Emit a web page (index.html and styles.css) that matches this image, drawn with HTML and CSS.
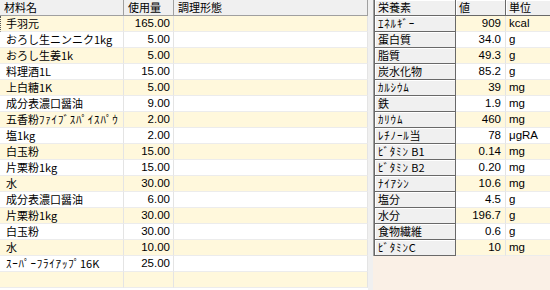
FILE: index.html
```html
<!DOCTYPE html>
<html lang="ja">
<head>
<meta charset="utf-8">
<link rel="stylesheet" href="styles.css">
</head>
<body>
<div class="app">
  <div class="grid">
    <div class="row head">
      <div class="c c1">材料名</div><div class="c c2">使用量</div><div class="c c3">調理形態</div>
    </div>
    <div class="row alt"><div class="c c1 focus">手羽元</div><div class="c c2 num">165.00</div><div class="c c3"></div></div>
    <div class="row"><div class="c c1">おろし生ニンニク1kg</div><div class="c c2 num">5.00</div><div class="c c3"></div></div>
    <div class="row alt"><div class="c c1">おろし生姜1k</div><div class="c c2 num">5.00</div><div class="c c3"></div></div>
    <div class="row"><div class="c c1">料理酒1L</div><div class="c c2 num">15.00</div><div class="c c3"></div></div>
    <div class="row alt"><div class="c c1">上白糖1K</div><div class="c c2 num">5.00</div><div class="c c3"></div></div>
    <div class="row"><div class="c c1">成分表濃口醤油</div><div class="c c2 num">9.00</div><div class="c c3"></div></div>
    <div class="row alt"><div class="c c1">五香粉<span class="hk">ﾌｧｲﾌﾞｽﾊﾟｲｽﾊﾟｳ</span></div><div class="c c2 num">2.00</div><div class="c c3"></div></div>
    <div class="row"><div class="c c1">塩1kg</div><div class="c c2 num">2.00</div><div class="c c3"></div></div>
    <div class="row alt"><div class="c c1">白玉粉</div><div class="c c2 num">15.00</div><div class="c c3"></div></div>
    <div class="row"><div class="c c1">片栗粉1kg</div><div class="c c2 num">15.00</div><div class="c c3"></div></div>
    <div class="row alt"><div class="c c1">水</div><div class="c c2 num">30.00</div><div class="c c3"></div></div>
    <div class="row"><div class="c c1">成分表濃口醤油</div><div class="c c2 num">6.00</div><div class="c c3"></div></div>
    <div class="row alt"><div class="c c1">片栗粉1kg</div><div class="c c2 num">30.00</div><div class="c c3"></div></div>
    <div class="row"><div class="c c1">白玉粉</div><div class="c c2 num">30.00</div><div class="c c3"></div></div>
    <div class="row alt"><div class="c c1">水</div><div class="c c2 num">10.00</div><div class="c c3"></div></div>
    <div class="row"><div class="c c1"><span class="hk">ｽｰﾊﾟｰﾌﾗｲｱｯﾌﾟ</span>16K</div><div class="c c2 num">25.00</div><div class="c c3"></div></div>
    <div class="row alt"><div class="c c1"></div><div class="c c2 num"></div><div class="c c3"></div></div>
  </div>
  <div class="split"></div>
  <div class="panel">
    <div class="ntable">
      <div class="nrow nhead"><div class="n n1">栄養素</div><div class="n n2">値</div><div class="n n3">単位</div></div>
      <div class="nrow alt"><div class="n n1"><span class="hk">ｴﾈﾙｷﾞｰ</span></div><div class="n n2">909</div><div class="n n3">kcal</div></div>
      <div class="nrow"><div class="n n1">蛋白質</div><div class="n n2">34.0</div><div class="n n3">g</div></div>
      <div class="nrow alt"><div class="n n1">脂質</div><div class="n n2">49.3</div><div class="n n3">g</div></div>
      <div class="nrow"><div class="n n1">炭水化物</div><div class="n n2">85.2</div><div class="n n3">g</div></div>
      <div class="nrow alt"><div class="n n1"><span class="hk">ｶﾙｼｳﾑ</span></div><div class="n n2">39</div><div class="n n3">mg</div></div>
      <div class="nrow"><div class="n n1">鉄</div><div class="n n2">1.9</div><div class="n n3">mg</div></div>
      <div class="nrow alt"><div class="n n1"><span class="hk">ｶﾘｳﾑ</span></div><div class="n n2">460</div><div class="n n3">mg</div></div>
      <div class="nrow"><div class="n n1"><span class="hk">ﾚﾁﾉｰﾙ</span>当</div><div class="n n2">78</div><div class="n n3">μgRA</div></div>
      <div class="nrow alt"><div class="n n1"><span class="hk">ﾋﾞﾀﾐﾝ</span> B1</div><div class="n n2">0.14</div><div class="n n3">mg</div></div>
      <div class="nrow"><div class="n n1"><span class="hk">ﾋﾞﾀﾐﾝ</span> B2</div><div class="n n2">0.20</div><div class="n n3">mg</div></div>
      <div class="nrow alt"><div class="n n1"><span class="hk">ﾅｲｱｼﾝ</span></div><div class="n n2">10.6</div><div class="n n3">mg</div></div>
      <div class="nrow"><div class="n n1">塩分</div><div class="n n2">4.5</div><div class="n n3">g</div></div>
      <div class="nrow alt"><div class="n n1">水分</div><div class="n n2">196.7</div><div class="n n3">g</div></div>
      <div class="nrow"><div class="n n1">食物繊維</div><div class="n n2">0.6</div><div class="n n3">g</div></div>
      <div class="nrow alt"><div class="n n1"><span class="hk">ﾋﾞﾀﾐﾝ</span>C</div><div class="n n2">10</div><div class="n n3">mg</div></div>
    </div>
  </div>
</div>
</body>
</html>
```

FILE: styles.css
```css
html, body {
  margin: 0;
  padding: 0;
  background: #ffffff;
}
body {
  font-family: "Noto Sans CJK JP", sans-serif;
  font-size: 11px;
  color: #000000;
}
.app {
  display: flex;
  width: 550px;
  height: 290px;
  overflow: hidden;
}
.grid {
  width: 368px;
  flex: none;
  background: #ffffff;
}
.row {
  display: grid;
  grid-template-columns: 124px 50px 194px;
  height: 16px;
}
.c {
  box-sizing: border-box;
  height: 16px;
  line-height: 15px;
  border-right: 1px solid #e4e4e4;
  border-bottom: 1px solid #ececec;
  white-space: nowrap;
  overflow: hidden;
  padding: 0 3px 0 6px;
}
.hk {
  letter-spacing: 0.8px;
}
.row.alt .c {
  background: #fff8dc;
}
.num {
  text-align: right;
  font-family: "Liberation Sans", sans-serif;
  font-size: 11.5px;
}
.focus {
  border-left: 1px dotted #555555;
  padding-left: 5px;
}
.head .c {
  background: #f0f0f0;
  border-right: 1px solid #a0a0a0;
  border-bottom: 1px solid #a0a0a0;
  padding-left: 4px;
  text-align: left;
  font-family: "Noto Sans CJK JP", sans-serif;
  font-size: 11px;
}
.split {
  width: 5px;
  flex: none;
  background: #f0f0f0;
}
.panel {
  flex: 1;
  background: #faf0e6;
}
.ntable {
  border-left: 1px solid #a0a0a0;
  box-shadow: inset 1px 0 0 #696969;
  padding-left: 1px;
}
.nrow {
  display: grid;
  grid-template-columns: 81px 50px 45px;
  height: 16px;
}
.n {
  box-sizing: border-box;
  height: 16px;
  line-height: 15px;
  white-space: nowrap;
  overflow: hidden;
  background: #ffffff;
  border-right: 1px solid #e4e4e4;
  border-bottom: 1px solid #ececec;
  padding: 0 3px;
}
.nrow.alt .n {
  background: #fff8dc;
}
.nrow .n1 {
  background: #f0f0f0;
  border-right: 1px solid #696969;
  border-bottom: 1px solid #696969;
  box-shadow: inset 1px 1px 0 #ffffff;
  padding-left: 3px;
}
.nrow.alt .n1 {
  background: #f0f0f0;
}
.n2 {
  text-align: right;
  font-family: "Liberation Sans", sans-serif;
  font-size: 11.5px;
  padding-right: 4px;
}
.n3 {
  font-family: "Liberation Sans", sans-serif;
  font-size: 11.5px;
}
.nhead .n {
  background: #f0f0f0;
  border-right: 1px solid #696969;
  border-bottom: 1px solid #696969;
  box-shadow: inset 1px 1px 0 #ffffff;
  text-align: left;
  font-family: "Noto Sans CJK JP", sans-serif;
  font-size: 11px;
  padding-left: 3px;
}
```
